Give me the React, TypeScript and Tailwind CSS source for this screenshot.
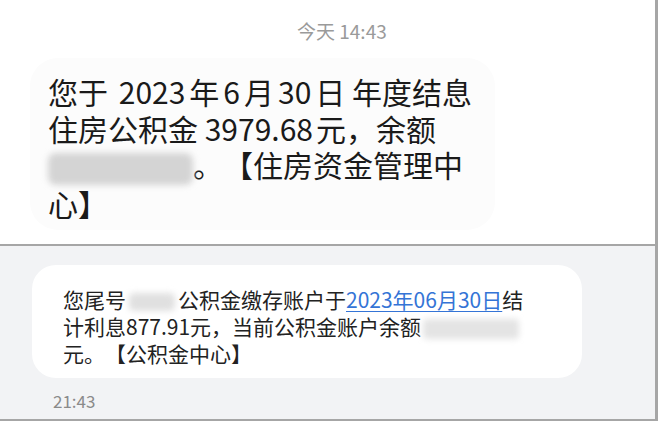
const cjk = "font-['Noto_Sans_CJK_SC','Noto_Sans',sans-serif] [text-spacing-trim:space-all]"

function Blur({ className }: { className: string }) {
  return <span className={`inline-block align-middle blur-[3px] ${className}`} />
}

function Num({ children }: { children: React.ReactNode }) {
  return <span className="px-[4px]">{children}</span>
}

export default function App() {
  return (
    <div className={`w-[658px] h-[424px] bg-white overflow-hidden ${cjk}`}>
      <div className="h-[421px] border-r-[3px] border-b-2 border-[#a6a6a6] flex flex-col">
        <div className="h-[246px] border-b-2 border-[#a6a6a6] bg-white">
          <div className="pt-[19px] pl-[297px] text-[19px] leading-[24px] text-[#9a9a9a]">今天 14:43</div>
          <div className="mt-[15px] ml-[30px] w-[465px] h-[172px] rounded-[28px] bg-[#fcfcfc] pl-[18px] pt-[15px] text-[30px] leading-[36.5px] text-[#1a1a1a]">
            <div>您于 <Num>2023</Num>年<Num>6</Num>月<Num>30</Num>日 年度结息</div>
            <div>住房公积金 3979.68<span className="pl-[3px]">元，余额</span></div>
            <div className="whitespace-nowrap">
              <Blur className="w-[145px] h-[32px] rounded-[8px] bg-[#d4d4d4]" />
              。【住房资金管理中
            </div>
            <div>心】</div>
          </div>
        </div>
        <div className="flex-1 bg-[#f2f3f5]">
          <div className="mt-[19px] ml-[32px] w-[550px] rounded-[24px] bg-white pl-[31px] pt-[21px] pb-[11px] text-[21px] leading-[27px] text-[#222]">
            <div className="whitespace-nowrap">
              您尾号
              <Blur className="w-[46px] h-[18px] mx-[3px] rounded-[5px] bg-[#e0e0e0]" />
              公积金缴存账户于
              <span className="text-[#3474d6] underline underline-offset-[3px] decoration-[1px]">2023年06月30日</span>
              结
            </div>
            <div className="whitespace-nowrap">
              计利息877.91元，当前公积金账户余额
              <Blur className="w-[96px] h-[20px] ml-[2px] rounded-[4px] bg-[#e4e4e4]" />
            </div>
            <div>元。【公积金中心】</div>
          </div>
          <div className="mt-[13px] pl-[53px] text-[17px] leading-[20px] text-[#8a8a8a]">21:43</div>
        </div>
      </div>
    </div>
  )
}
